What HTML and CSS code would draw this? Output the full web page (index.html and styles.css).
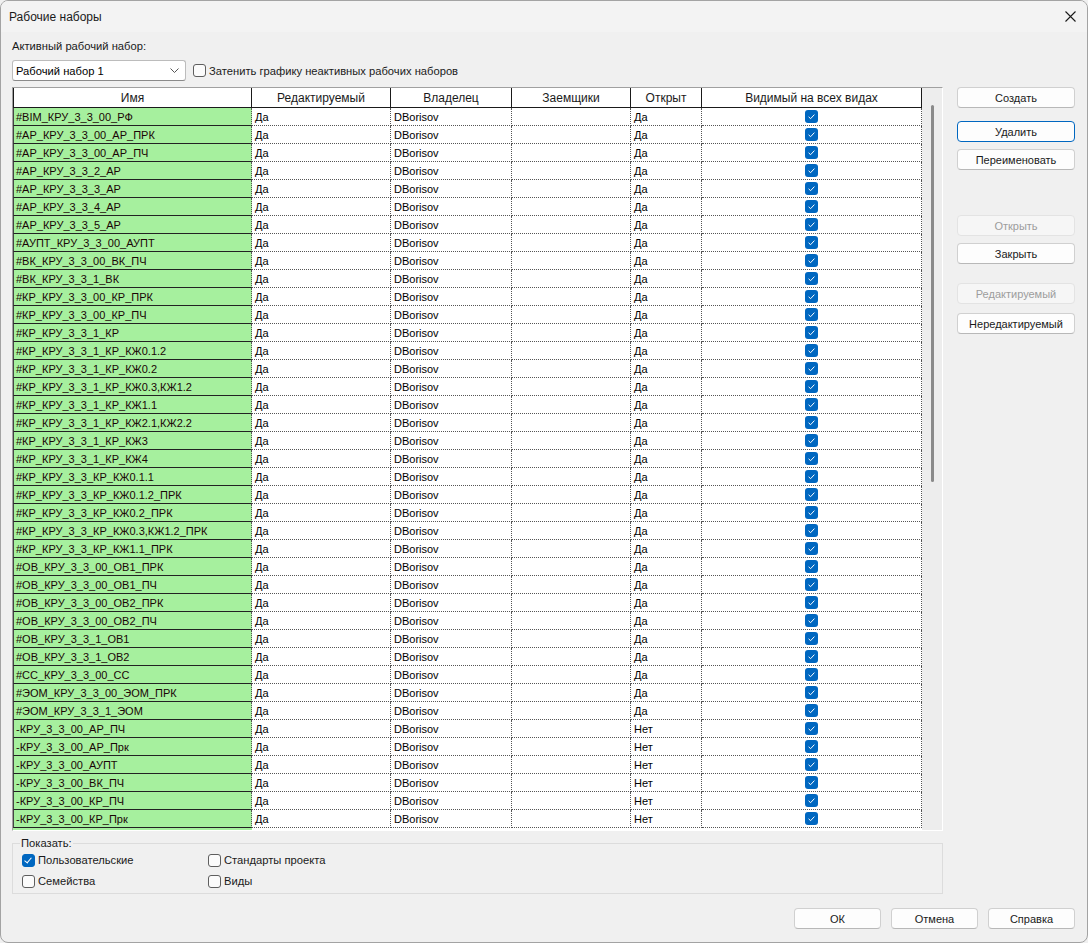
FILE: index.html
```html
<!DOCTYPE html>
<html lang="ru">
<head>
    <meta charset="UTF-8">
    <title>Рабочие наборы</title>
    <link rel="stylesheet" href="styles.css">
</head>
<body>
    <div class="window">
        <!-- заголовок окна -->
        <div class="titlebar">
            <span class="title">Рабочие наборы</span>
            <svg class="close" width="11" height="11" viewBox="0 0 11 11">
                <path d="M0.5 0.5 L10.5 10.5 M10.5 0.5 L0.5 10.5" stroke="#1a1a1a" stroke-width="1.1" fill="none"/>
            </svg>
        </div>

        <div class="content">
            <div class="main">
                <div class="left">
                    <div class="label">Активный рабочий набор:</div>
                    <div class="combo-row">
                        <div class="combo">
                            <span>Рабочий набор 1</span>
                            <svg class="chevron" width="9" height="5" viewBox="0 0 9 5">
                                <path d="M0.5 0.5 L4.5 4.5 L8.5 0.5" stroke="#555" stroke-width="1" fill="none"/>
                            </svg>
                        </div>
                        <label class="check">
                            <span class="box"></span>
                            <span>Затенить графику неактивных рабочих наборов</span>
                        </label>
                    </div>

                    <!-- таблица рабочих наборов -->
                    <div class="grid">
                        <div class="grid-body">
                            <table class="sets">
                                <colgroup>
                                    <col style="width: 239px">
                                    <col style="width: 139px">
                                    <col style="width: 121px">
                                    <col style="width: 119px">
                                    <col style="width: 71px">
                                    <col style="width: 220px">
                                </colgroup>
                                <thead>
                                    <tr>
                                        <th class="col-name">Имя</th>
                                        <th>Редактируемый</th>
                                        <th>Владелец</th>
                                        <th>Заемщики</th>
                                        <th>Открыт</th>
                                        <th>Видимый на всех видах</th>
                                    </tr>
                                </thead>
                                <tbody id="rows"></tbody>
                            </table>
                        </div>
                        <div class="vscroll">
                            <div class="thumb"></div>
                        </div>
                    </div>

                    <fieldset class="show">
                        <legend>Показать:</legend>
                        <div class="show-grid">
                            <label class="check">
                                <span class="box checked"></span>
                                <span>Пользовательские</span>
                            </label>
                            <label class="check">
                                <span class="box"></span>
                                <span>Стандарты проекта</span>
                            </label>
                            <label class="check">
                                <span class="box"></span>
                                <span>Семейства</span>
                            </label>
                            <label class="check">
                                <span class="box"></span>
                                <span>Виды</span>
                            </label>
                        </div>
                    </fieldset>
                </div>

                <!-- кнопки справа -->
                <div class="side">
                    <button class="btn">Создать</button>
                    <button class="btn focus gap-top-lg">Удалить</button>
                    <button class="btn gap-top">Переименовать</button>
                    <button class="btn disabled gap-top-xl">Открыть</button>
                    <button class="btn gap-top">Закрыть</button>
                    <button class="btn disabled gap-top-md">Редактируемый</button>
                    <button class="btn gap-top-sm">Нередактируемый</button>
                </div>
            </div>

            <div class="footer">
                <button class="btn wide">ОК</button>
                <button class="btn wide">Отмена</button>
                <button class="btn wide">Справка</button>
            </div>
        </div>
    </div>

    <script>
        const names = [
            '#BIM_КРУ_3_3_00_РФ',
            '#АР_КРУ_3_3_00_АР_ПРК',
            '#АР_КРУ_3_3_00_АР_ПЧ',
            '#АР_КРУ_3_3_2_АР',
            '#АР_КРУ_3_3_3_АР',
            '#АР_КРУ_3_3_4_АР',
            '#АР_КРУ_3_3_5_АР',
            '#АУПТ_КРУ_3_3_00_АУПТ',
            '#ВК_КРУ_3_3_00_ВК_ПЧ',
            '#ВК_КРУ_3_3_1_ВК',
            '#КР_КРУ_3_3_00_КР_ПРК',
            '#КР_КРУ_3_3_00_КР_ПЧ',
            '#КР_КРУ_3_3_1_КР',
            '#КР_КРУ_3_3_1_КР_КЖ0.1.2',
            '#КР_КРУ_3_3_1_КР_КЖ0.2',
            '#КР_КРУ_3_3_1_КР_КЖ0.3,КЖ1.2',
            '#КР_КРУ_3_3_1_КР_КЖ1.1',
            '#КР_КРУ_3_3_1_КР_КЖ2.1,КЖ2.2',
            '#КР_КРУ_3_3_1_КР_КЖ3',
            '#КР_КРУ_3_3_1_КР_КЖ4',
            '#КР_КРУ_3_3_КР_КЖ0.1.1',
            '#КР_КРУ_3_3_КР_КЖ0.1.2_ПРК',
            '#КР_КРУ_3_3_КР_КЖ0.2_ПРК',
            '#КР_КРУ_3_3_КР_КЖ0.3,КЖ1.2_ПРК',
            '#КР_КРУ_3_3_КР_КЖ1.1_ПРК',
            '#ОВ_КРУ_3_3_00_ОВ1_ПРК',
            '#ОВ_КРУ_3_3_00_ОВ1_ПЧ',
            '#ОВ_КРУ_3_3_00_ОВ2_ПРК',
            '#ОВ_КРУ_3_3_00_ОВ2_ПЧ',
            '#ОВ_КРУ_3_3_1_ОВ1',
            '#ОВ_КРУ_3_3_1_ОВ2',
            '#СС_КРУ_3_3_00_СС',
            '#ЭОМ_КРУ_3_3_00_ЭОМ_ПРК',
            '#ЭОМ_КРУ_3_3_1_ЭОМ',
            '-КРУ_3_3_00_АР_ПЧ',
            '-КРУ_3_3_00_АР_Прк',
            '-КРУ_3_3_00_АУПТ',
            '-КРУ_3_3_00_ВК_ПЧ',
            '-КРУ_3_3_00_КР_ПЧ',
            '-КРУ_3_3_00_КР_Прк'
        ];

        const tick = '<svg width="13" height="13" viewBox="0 0 13 13"><rect x="0" y="0" width="13" height="13" rx="3" fill="#0067c0"/><path d="M3.6 6.8 L5.6 8.7 L9.4 4.6" stroke="#fff" stroke-width="1" fill="none"/></svg>';

        // строки таблицы
        const body = document.getElementById('rows');
        body.innerHTML = names.map(name => {
            const open = name.startsWith('-') ? 'Нет' : 'Да';
            return `<tr>
                <td class="col-name">${name}</td>
                <td>Да</td>
                <td>DBorisov</td>
                <td></td>
                <td>${open}</td>
                <td class="col-vis">${tick}</td>
            </tr>`;
        }).join('');
    </script>
</body>
</html>
```

FILE: styles.css
```css
/* общий вид окна */
html, body {
    margin: 0;
    padding: 0;
    background: #f0f0f0;
}

body {
    font-family: "Liberation Sans", Arial, sans-serif;
    font-size: 11.2px;
    color: #000;
}

.window {
    box-sizing: border-box;
    width: 1088px;
    height: 943px;
    border: 1px solid #a3a3a3;
    border-radius: 8px;
    background: #f0f0f0;
    overflow: hidden;
    display: flex;
    flex-direction: column;
}

/* заголовок */
.titlebar {
    height: 31px;
    display: flex;
    align-items: center;
    justify-content: space-between;
    padding: 0 11px 0 8px;
    background: #f3f3f3;
}

.title {
    font-size: 12px;
    color: #1a1a1a;
}

.close {
    display: block;
}

.content {
    flex: 1;
    display: flex;
    flex-direction: column;
    padding: 7px 12px 13px 11px;
}

.main {
    flex: 1;
    display: flex;
    gap: 14px;
}

.left {
    width: 931px;
    display: flex;
    flex-direction: column;
}

.label {
    height: 15px;
    line-height: 15px;
    color: #1a1a1a;
}

/* выпадающий список */
.combo-row {
    display: flex;
    align-items: center;
    margin-top: 6px;
    gap: 7px;
}

.combo {
    box-sizing: border-box;
    width: 174px;
    height: 21px;
    border: 1px solid #bcbcbc;
    border-bottom-color: #8a8a8a;
    border-radius: 3px;
    background: #fff;
    display: flex;
    align-items: center;
    justify-content: space-between;
    padding: 0 6px 0 3px;
}

.chevron {
    display: block;
}

/* флажки */
.check {
    display: flex;
    align-items: center;
    gap: 3px;
    height: 14px;
    color: #1a1a1a;
}

.box {
    box-sizing: border-box;
    width: 13px;
    height: 13px;
    border: 1px solid #5e5e5e;
    border-radius: 3px;
    background: #fbfbfb;
    position: relative;
}

.box.checked {
    background: #0067c0;
    border-color: #0067c0;
}

.box.checked::after {
    content: "";
    position: absolute;
    left: 3px;
    top: 1px;
    width: 3px;
    height: 6px;
    border: solid #fff;
    border-width: 0 1px 1px 0;
    transform: rotate(40deg);
}

/* таблица */
.grid {
    margin-top: 6px;
    height: 744px;
    box-sizing: border-box;
    border: 1px solid;
    border-color: #a0a0a0 #fff #fff #a0a0a0;
    display: flex;
}

.grid-body {
    width: 909px;
    overflow: hidden;
    background: linear-gradient(to right, #a6f09e 239px, #fff 239px);
}

.sets {
    table-layout: fixed;
    width: 909px;
    border-collapse: separate;
    border-spacing: 0;
}

.sets th {
    height: 19px;
    padding: 0;
    font-size: 12px;
    font-weight: normal;
    background: #fff;
    border-right: 1px solid #1a1a1a;
    border-bottom: 1px solid #1a1a1a;
    text-align: center;
    color: #1a1a1a;
}

.sets th.col-name {
    border-left: 1px solid #1a1a1a;
}

.sets td {
    height: 17px;
    padding: 0 0 0 3px;
    font-size: 11px;
    white-space: nowrap;
    overflow: hidden;
    background: #fff;
    border-right: 1px dotted #555;
    border-bottom: 1px dotted #555;
}

.sets td.col-name {
    background: #a6f09e;
    border-left: 1px solid #444;
    border-bottom: 1px solid #222;
    padding-left: 2px;
    color: #1a0505;
}

.sets td.col-vis {
    text-align: center;
    padding: 0;
}

.sets td.col-vis svg {
    display: block;
    margin: 0 auto;
}

/* полоса прокрутки */
.vscroll {
    width: 20px;
    background: #ededed;
    position: relative;
}

.thumb {
    position: absolute;
    left: 9px;
    top: 17px;
    width: 3px;
    height: 377px;
    border-radius: 2px;
    background: #8a8a8a;
}

/* группа Показать */
.show {
    margin: 5px 0 0 0;
    padding: 0 0 0 9px;
    border: 1px solid #dcdcdc;
    height: 58px;
    box-sizing: border-box;
}

.show legend {
    padding: 0 1px;
    margin-left: -2px;
    color: #1a1a1a;
    line-height: 14px;
}

.show-grid {
    display: grid;
    grid-template-columns: 186px 200px;
    row-gap: 7px;
    margin-top: 3px;
}

/* кнопки */
.side {
    width: 118px;
    display: flex;
    flex-direction: column;
    padding-top: 48px;
}

.btn {
    box-sizing: border-box;
    height: 21px;
    width: 100%;
    padding: 0;
    border: 1px solid #d0d0d0;
    border-bottom-color: #b8b8b8;
    border-radius: 4px;
    background: #fdfdfd;
    font-family: "Liberation Sans", Arial, sans-serif;
    font-size: 11px;
    color: #1a1a1a;
}

.btn.focus {
    border: 1px solid #0067c0;
}

.btn.disabled {
    color: #9d9d9d;
    background: #f6f6f6;
    border-color: #e3e3e3;
}

.gap-top {
    margin-top: 7px;
}

.gap-top-sm {
    margin-top: 9px;
}

.gap-top-md {
    margin-top: 19px;
}

.gap-top-lg {
    margin-top: 13px;
}

.gap-top-xl {
    margin-top: 45px;
}

.footer {
    display: flex;
    justify-content: flex-end;
    gap: 10px;
    margin-top: 13px;
}

.btn.wide {
    width: 87px;
}
```
